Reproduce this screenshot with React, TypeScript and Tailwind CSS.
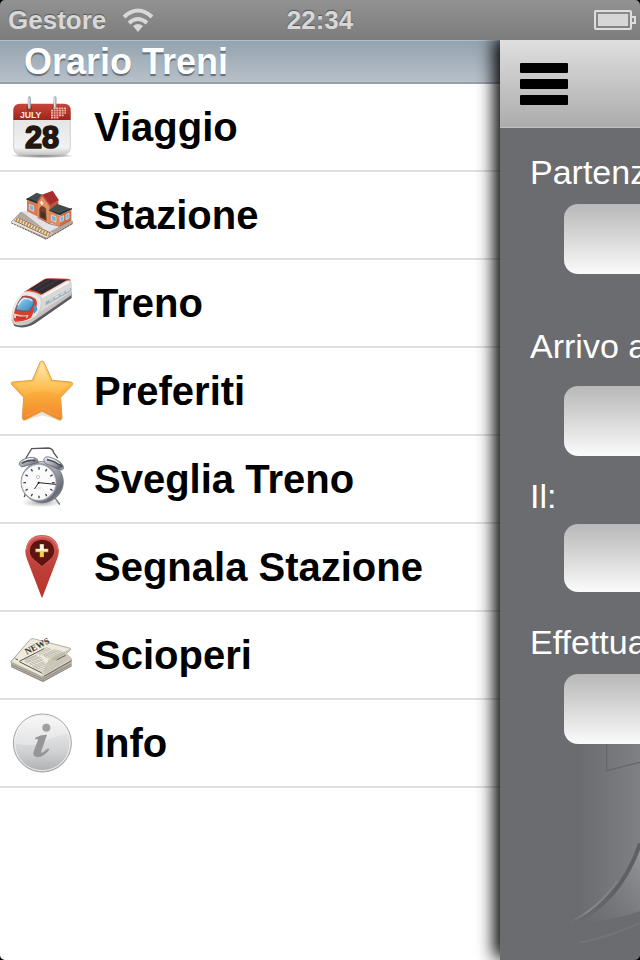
import type { ReactNode } from "react";

function Icon({ children }: { children: ReactNode }) {
  return (
    <svg viewBox="30 30 192 192" className="size-16 shrink-0" aria-hidden="true">
      {children}
    </svg>
  );
}

function CalendarIcon() {
  return (
    <Icon>
      <defs>
        <linearGradient id="calRed" x1="0" y1="0" x2="0" y2="1">
          <stop offset="0" stopColor="#c8473c" />
          <stop offset="1" stopColor="#9d2418" />
        </linearGradient>
        <linearGradient id="calBody" x1="0" y1="0" x2="0" y2="1">
          <stop offset="0" stopColor="#dedede" />
          <stop offset="0.85" stopColor="#f2f2f2" />
          <stop offset="1" stopColor="#c4c4c4" />
        </linearGradient>
        <radialGradient id="calShade">
          <stop offset="0" stopColor="#555" stopOpacity="0.8" />
          <stop offset="0.7" stopColor="#777" stopOpacity="0.5" />
          <stop offset="1" stopColor="#999" stopOpacity="0" />
        </radialGradient>
      </defs>
      <ellipse cx="126" cy="212" rx="96" ry="7" fill="url(#calShade)" />
      <rect x="41" y="62" width="170" height="148" rx="22" fill="url(#calBody)" stroke="#bdbdbd" strokeWidth="2" />
      <path d="M40 105V76q0-20 20-20h132q20 0 20 20v29z" fill="url(#calRed)" />
      <g fill="#8f2a20">
        <circle cx="88" cy="69" r="8" />
        <circle cx="165" cy="69" r="8" />
      </g>
      <g stroke="#9a9ea1" strokeWidth="9" strokeLinecap="round">
        <path d="M88 38v30M165 38v30" />
      </g>
      <g stroke="#dfe3e5" strokeWidth="4" strokeLinecap="round">
        <path d="M87 38v29M164 38v29" />
      </g>
      <text x="60" y="98" fontSize="26" fontWeight="700" fill="#fbeae6" fontFamily="Liberation Sans, sans-serif">JULY</text>
      <g stroke="#eab8af" strokeWidth="5" strokeDasharray="6 2">
        <path d="M160 70h38M153 77h45M153 84h45M153 91h38M153 98h22" />
      </g>
      <text x="126" y="190" textAnchor="middle" fontSize="92" fontWeight="700" fill="#221711" stroke="#221711" strokeWidth="5" strokeLinejoin="round" fontFamily="Liberation Sans, sans-serif">28</text>
    </Icon>
  );
}

function StationIcon() {
  return (
    <Icon>
      <path d="M32 147l30-31 157 28v9l-82 47z" fill="#b3a89f" />
      <path d="M66 116l82-20 67 46-70 36z" fill="#e2e1e6" />
      <path d="M34 148l19-17 106 49-18 14z" fill="#ece5d8" />
      <path d="M43 143l99 46M53 133l101 48" stroke="#8a7261" strokeWidth="3" />
      <path d="M48 138l101 47" stroke="#ba8842" strokeWidth="10" strokeDasharray="5 4" />
      <path d="M34 150l105 48 79-47" fill="none" stroke="#6b5b5a" strokeWidth="3" strokeDasharray="6 3" />
      <path d="M81 80l39 14v40l-39-19z" fill="#d97b4d" />
      <path d="M78 79l32-20 27 10-22 24z" fill="#424b4e" />
      <path d="M78 79l37 14v-5L83 75z" fill="#283235" />
      <path d="M113 88l13-22 22 29v58l-35-20z" fill="#e39361" />
      <path d="M126 65l32-12 19 29-28 16z" fill="#a52e2d" />
      <path d="M112 89l14-23 23 31" fill="none" stroke="#c5594a" strokeWidth="4" />
      <path d="M148 97l27-14v40l-27 30z" fill="#b9593c" />
      <path d="M148 114l31 14v32l-31-12z" fill="#e28a59" />
      <path d="M179 126l35-16v31l-35 19z" fill="#cd7047" />
      <path d="M146 112l26-19 44 15-37 18z" fill="#414a4c" />
      <path d="M146 112l33 14 37-17v-4l-37 16z" fill="#263033" />
      <path d="M118 108q6-17 20-1l2 37-22-11z" fill="#70402c" />
      <path d="M122 114l14 7v18l-14-8z" fill="#4b3027" />
      <g fill="#77b5e1" stroke="#e6edf2" strokeWidth="2">
        <path d="M88 94l13 5v16l-13-6zM154 126l14 5v16l-14-6zM181 132l10-4v14l-10 5zM198 125l9-4v14l-9 5z" />
      </g>
      <path d="M125 84v11M120 88l10 4" stroke="#f7eee8" strokeWidth="4" />
      <path d="M113 134l35 18 31 8 35-19" fill="none" stroke="#9b4936" strokeWidth="2" />
    </Icon>
  );
}

function TrainIcon() {
  return (
    <Icon>
      <defs>
        <linearGradient id="trainBody" x1="0" y1="0" x2="1" y2="1">
          <stop offset="0" stopColor="#f4f3f2" />
          <stop offset="0.5" stopColor="#d8d4d2" />
          <stop offset="1" stopColor="#948d8c" />
        </linearGradient>
        <linearGradient id="trainGlass" x1="0" y1="0" x2="1" y2="1">
          <stop offset="0" stopColor="#a7dbf5" />
          <stop offset="1" stopColor="#2c80c0" />
        </linearGradient>
      </defs>
      <path d="M34 176l9 19q28 11 61-7l111-77V94L84 180z" fill="#5a5b60" />
      <path d="M34 172q-1-40 32-76l65-40q8-5 19-4l54 2q10 2 11 14v34l-110 76q-31 23-62 12-8-4-9-18z" fill="url(#trainBody)" />
      <path d="M72 93l60-38q8-4 20-3l50 1q8 1 12 5l-17 1-74 43q-21-12-49-12z" fill="#d3422e" />
      <path d="M87 85l51-31 64 2-76 43q-17-11-39-14z" fill="#302c31" />
      <path d="M98 86l54-32M112 91l64-36" stroke="#4e484d" strokeWidth="2" />
      <path d="M124 106l82-46q7 0 8 8v24l-94 60q10-24 4-46z" fill="#dbd8d6" />
      <path d="M137 122l76-42v10l-76 43z" fill="#9db0c0" />
      <path d="M148 120l62-35" stroke="#d8e6ee" strokeWidth="4" strokeDasharray="14 5" />
      <path d="M126 108l80-45" stroke="#fbfaf9" strokeWidth="5" />
      <path d="M37 170q0-39 30-73 31-7 51 13 8 12 2 32l-12 25q-31 18-70 17z" fill="#eceae8" />
      <path d="M42 156q6-29 25-51 20-5 37 7 9 7 6 22l-17 36q-19 12-48 12-8-7-3-26z" fill="#d83e2b" />
      <path d="M50 137q5-18 19-29 18-2 31 8 4 6-1 16l-12 18q-18 1-39-4z" fill="url(#trainGlass)" stroke="#3f5c74" strokeWidth="2" />
      <path d="M54 133q9-17 19-21 16 0 24 7" fill="none" stroke="#daf1fb" strokeWidth="4" />
      <path d="M41 157q22 9 45 5l-4 8q-20 5-41 0z" fill="#efc9c2" />
      <path d="M48 164q17 4 32 2l-3 7q-14 3-29 0z" fill="#c7372a" />
      <path d="M37 175l4 9q28 4 51-7l22-15" fill="none" stroke="#c9c4c2" strokeWidth="4" />
      <path d="M103 131q9 2 9 16l-10 12q-5-14 1-28z" fill="#4a94cf" />
    </Icon>
  );
}

function StarIcon() {
  return (
    <Icon>
      <defs>
        <linearGradient id="starFill" x1="0" y1="0" x2="0" y2="1">
          <stop offset="0" stopColor="#ffdc85" />
          <stop offset="0.45" stopColor="#fdb440" />
          <stop offset="1" stopColor="#f0862a" />
        </linearGradient>
        <linearGradient id="starGloss" x1="0" y1="0" x2="0" y2="1">
          <stop offset="0" stopColor="#fff2c8" stopOpacity="0.7" />
          <stop offset="1" stopColor="#ffd26d" stopOpacity="0.15" />
        </linearGradient>
      </defs>
      <path d="M70 213l56-22 58 22-57-17z" fill="#796840" stroke="#c5b58c" strokeWidth="6" opacity="0.35" />
      <path d="M120 40q6-8 12 0l24 54 57 5q9 3 3 10l-34 36 4 60q0 10-10 7l-50-25-50 25q-10 3-9-7l4-60-35-37q-6-8 3-9l58-5z" fill="url(#starFill)" stroke="#dba046" strokeWidth="3" strokeLinejoin="round" />
      <path d="M126 43l26 55 58 6-34 32q-50-20-101 4l-31-36 58-6z" fill="url(#starGloss)" />
      <path d="M74 203l52-24 54 24" fill="none" stroke="#f79d45" strokeWidth="3" />
    </Icon>
  );
}

function ClockIcon() {
  const ticks = Array.from({ length: 12 }, (_, i) => i * 30);
  return (
    <Icon>
      <defs>
        <linearGradient id="clockMetal" x1="0" y1="0" x2="1" y2="1">
          <stop offset="0" stopColor="#eef0f3" />
          <stop offset="0.5" stopColor="#a2a6ae" />
          <stop offset="0.8" stopColor="#666a74" />
          <stop offset="1" stopColor="#c9ccd2" />
        </linearGradient>
        <radialGradient id="clockShade">
          <stop offset="0" stopColor="#777" stopOpacity="0.7" />
          <stop offset="1" stopColor="#999" stopOpacity="0" />
        </radialGradient>
      </defs>
      <ellipse cx="125" cy="197" rx="62" ry="14" fill="url(#clockShade)" />
      <path d="M78 63l17-28 50-2q13 1 16 14l11 15M78 165l-5 14M164 182l14 19" fill="none" stroke="#54565d" strokeWidth="4" strokeLinecap="round" />
      <path d="M164 183l12 17" stroke="#babdc5" strokeWidth="2" />
      <ellipse cx="127" cy="135" rx="63" ry="62" fill="url(#clockMetal)" stroke="#666a74" strokeWidth="2" />
      <path d="M58 84q-3-13 20-20 22-7 34 3l3 10-50 13z" fill="url(#clockMetal)" stroke="#585b65" strokeWidth="2" />
      <path d="M131 68q3-14 24-6 33 12 36 30-2 10-12 6l-44-19z" fill="url(#clockMetal)" stroke="#585b65" strokeWidth="2" />
      <path d="M65 79q18-12 42-8M141 68q28 5 45 22" fill="none" stroke="#4a4f5a" strokeWidth="5" />
      <path d="M73 70q11-6 27-5M145 64q22 5 34 16" fill="none" stroke="#fff" strokeWidth="3" />
      <ellipse cx="117" cy="136" rx="55" ry="57" fill="#868b95" />
      <ellipse cx="116" cy="136" rx="51" ry="53" fill="#fbfbfc" stroke="#cbced4" strokeWidth="2" />
      {ticks.map((angle) => (
        <path key={angle} d="M117 90v8" stroke="#3e4149" strokeWidth="4" transform={"rotate(" + angle + " 117 137)"} />
      ))}
      <circle cx="114" cy="120" r="5" fill="none" stroke="#aaa" strokeWidth="2" />
      <path d="M116 137l50 5M116 137l-12 18" stroke="#24262b" strokeWidth="3" strokeLinecap="round" />
      <circle cx="116" cy="137" r="3" fill="#111" />
      <path d="M106 153h18" stroke="#aaa" strokeWidth="2" strokeDasharray="4 2" />
    </Icon>
  );
}

function PinIcon() {
  return (
    <Icon>
      <defs>
        <linearGradient id="pinRed" x1="0" y1="0" x2="0" y2="1">
          <stop offset="0" stopColor="#d65a55" />
          <stop offset="0.5" stopColor="#bd4039" />
          <stop offset="1" stopColor="#b93328" />
        </linearGradient>
        <linearGradient id="pinCross" x1="0" y1="0" x2="0" y2="1">
          <stop offset="0.45" stopColor="#fffbe9" />
          <stop offset="0.55" stopColor="#f3d44c" />
        </linearGradient>
      </defs>
      <path d="M126 220L81 103q-7-17-4-32 5-28 29-38 20-6 42 1 25 11 28 38 2 15-5 31z" fill="url(#pinRed)" />
      <path d="M79 74q3-27 28-37 19-6 40 1 24 11 27 36" fill="none" stroke="#e77f79" strokeWidth="3" />
      <path d="M126 125L98 101q-15-15-8-35 9-22 36-23 28 1 36 23 7 20-9 36z" fill="#5f1412" stroke="#dc6662" strokeWidth="2" />
      <path d="M119 57h13v14h13v11h-13v15h-13V82h-13V71h13z" fill="url(#pinCross)" stroke="#321008" strokeWidth="1" />
    </Icon>
  );
}

function NewsIcon() {
  return (
    <Icon>
      <path d="M33 148l96 43 86-50v19l-86 48-96-46z" fill="#b7b2a7" />
      <path d="M34 155l95 44 86-46M34 161l95 44 86-46" fill="none" stroke="#79736a" strokeWidth="2" />
      <path d="M33 149q-2-4 3-7l52-60q5-7 12-5l109 28q6 2 0 8l-10 9 15 15v7l-85 48z" fill="#d7d2c5" stroke="#99948a" strokeWidth="2" />
      <path d="M37 145l52-62q4-5 11-4l108 29-63 32-20 49z" fill="#eeebdd" />
      <path d="M127 190l16-43q18-23 66-36l-14 16 18 9-84 52z" fill="#ccc6b9" />
      <path d="M58 145l74-38M54 141l-8-4M58 146l69 35" stroke="#53504a" strokeWidth="3" />
      <text x="80" y="125" transform="rotate(-27 80 125)" fontSize="27" fontWeight="700" fill="#37342f" fontFamily="Liberation Serif, serif">NEWS</text>
      <g stroke="#a7a398" strokeWidth="2">
        <path d="M107 121l35-18M112 123l37-18M117 126l36-18" />
        <path d="M75 140l34-14M73 144l39-16M76 147l42-16M79 150l44-17M87 153l41-16M91 156l37-15" />
        <path d="M127 127l39-18M131 129l41-18M135 131l44-19M139 134l46-20M145 136l45-19M153 139l42-18M160 141l36-13" />
        <path d="M96 160l35-14M99 163l36-14M103 166l37-14M107 169l32-11M113 173l26-9M120 177l16-6" />
      </g>
      <path d="M170 141q14-8 27-14M132 190l82-47" fill="none" stroke="#6b665d" strokeWidth="3" />
    </Icon>
  );
}

function InfoIcon() {
  return (
    <Icon>
      <defs>
        <linearGradient id="infoFill" x1="0" y1="0" x2="0" y2="1">
          <stop offset="0" stopColor="#f6f6f6" />
          <stop offset="0.65" stopColor="#d0d1d3" />
          <stop offset="1" stopColor="#aeafb2" />
        </linearGradient>
      </defs>
      <circle cx="127" cy="126" r="87" fill="url(#infoFill)" stroke="#a5a5a5" strokeWidth="3" />
      <circle cx="127" cy="126" r="83" fill="none" stroke="#f0f0f0" strokeWidth="3" />
      <path d="M45 126q0-80 82-82 66 3 80 56-43 4-74 22-40 19-88 4z" fill="#fff" opacity="0.3" />
      <circle cx="139" cy="80" r="12" fill="#a0a0a2" />
      <path d="M106 110q16-10 35-9-4 12-16 46-4 10 2 8l17-13 4 4q-19 24-37 22-16-2-9-20l12-31q0-5-10-2z" fill="#969698" />
    </Icon>
  );
}

const menu = [
  { label: "Viaggio", icon: <CalendarIcon /> },
  { label: "Stazione", icon: <StationIcon /> },
  { label: "Treno", icon: <TrainIcon /> },
  { label: "Preferiti", icon: <StarIcon /> },
  { label: "Sveglia Treno", icon: <ClockIcon /> },
  { label: "Segnala Stazione", icon: <PinIcon /> },
  { label: "Scioperi", icon: <NewsIcon /> },
  { label: "Info", icon: <InfoIcon /> },
];

const fields = [
  { id: "partenza", label: "Partenza", group: "pt-6 gap-3", box: "h-[70px]" },
  { id: "arrivo", label: "Arrivo a", group: "pt-13 gap-5", box: "h-[70px]" },
  { id: "data", label: "Il:", group: "pt-5 gap-2", box: "h-[68px]" },
  { id: "effettua", label: "Effettua", group: "pt-[30px] gap-3", box: "h-[70px]" },
];

function StatusBar() {
  return (
    <header className="relative z-20 grid h-10 shrink-0 grid-cols-3 items-center bg-linear-to-b from-[#929292] to-[#7c7c7c] px-2 text-[26px] leading-10 font-bold text-[#d8d8d8] [text-shadow:0_-1px_1px_#555]">
      <div className="flex items-center gap-4">
        <span>Gestore</span>
        <svg viewBox="0 0 32 24" className="h-6 w-8" aria-hidden="true">
          <path d="M2 9q14-13 28 0M7 15q9-8 18 0" fill="none" stroke="#d8d8d8" strokeWidth="4" />
          <path d="M11 18q5-4 10 0l-5 6z" fill="#d8d8d8" />
        </svg>
      </div>
      <span className="text-center">22:34</span>
      <svg viewBox="0 0 42 20" className="-mr-1 h-5 w-[42px] justify-self-end" aria-hidden="true">
        <rect x="1" y="1" width="36" height="18" rx="1" fill="none" stroke="#dedede" strokeWidth="2" />
        <rect x="4" y="4" width="30" height="12" fill="#d6d6d6" />
        <path d="M38 7h3v6h-3" fill="none" stroke="#dedede" strokeWidth="2" />
      </svg>
    </header>
  );
}

function SideMenu() {
  return (
    <nav className="min-w-0 flex-[25] bg-white" aria-label="Orario Treni">
      <h1 className="h-11 border-t border-b-2 border-t-[#b3bfc7] border-b-[#98a0a7] bg-linear-to-b from-[#94a3ae] to-[#b8c0c9] px-6 text-[36px] leading-[42px] font-bold text-white [text-shadow:0_2px_1px_#636c73]">
        Orario Treni
      </h1>
      <ul>
        {menu.map((item) => (
          <li key={item.label} className="border-b-2 border-[#e0e0e0]">
            <a href="#" className="flex h-[86px] items-center gap-5 px-2.5 text-[40px] font-bold text-black">
              {item.icon}
              <span className="truncate">{item.label}</span>
            </a>
          </li>
        ))}
      </ul>
    </nav>
  );
}

function Backdrop() {
  return (
    <svg viewBox="60 0 420 660" className="absolute right-0 bottom-0 h-[220px] w-[140px]" aria-hidden="true">
      <defs>
        <linearGradient id="wall" x1="0" y1="0" x2="1" y2="0">
          <stop offset="0" stopColor="#85878b" stopOpacity="0" />
          <stop offset="1" stopColor="#85878b" stopOpacity="0.75" />
        </linearGradient>
        <linearGradient id="ground" x1="0" y1="1" x2="1" y2="0">
          <stop offset="0" stopColor="#7c7e81" stopOpacity="0" />
          <stop offset="1" stopColor="#a0a1a4" />
        </linearGradient>
        <linearGradient id="railDark" gradientUnits="userSpaceOnUse" x1="270" y1="550" x2="400" y2="440">
          <stop offset="0" stopColor="#5e6063" stopOpacity="0" />
          <stop offset="1" stopColor="#5e6063" />
        </linearGradient>
        <linearGradient id="railLight" gradientUnits="userSpaceOnUse" x1="270" y1="550" x2="400" y2="440">
          <stop offset="0" stopColor="#8c8e91" stopOpacity="0" />
          <stop offset="0.4" stopColor="#8c8e91" />
          <stop offset="1" stopColor="#8c8e91" stopOpacity="0.5" />
        </linearGradient>
      </defs>
      <path d="M300 10h180v310q-60 150-180 218z" fill="url(#wall)" />
      <path d="M380 10v82l100-25" fill="none" stroke="#66686c" strokeWidth="4" />
      <path d="M480 330q-60 150-180 218 110-8 180-35z" fill="url(#ground)" opacity="0.8" />
      <path d="M480 310q-60 180-210 240" fill="none" stroke="url(#railDark)" strokeWidth="12" />
      <path d="M412 422q-55 84-145 126" fill="none" stroke="url(#railLight)" strokeWidth="5" />
      <path d="M300 608q90-18 180-60" fill="none" stroke="#737579" strokeWidth="6" />
      <path d="M470 660l10-10v10z" fill="#000" />
    </svg>
  );
}

function SearchPanel() {
  return (
    <main className="relative z-10 min-w-0 flex-[7] bg-[#6a6c70] shadow-[-6px_-2px_16px_#000]">
      <Backdrop />
      <div className="flex h-22 items-center border-b border-[#c0c0c0] bg-linear-to-b from-[#dfdfdf] to-[#acacac] px-5">
        <button type="button" aria-label="Menu" className="flex w-12 flex-col gap-1.5">
          <span className="h-2.5 w-full rounded-[1px] bg-black" />
          <span className="h-2.5 w-full rounded-[1px] bg-black" />
          <span className="h-2.5 w-full rounded-[1px] bg-black" />
        </button>
      </div>
      <form className="relative overflow-hidden">
        {fields.map((field) => (
          <div key={field.id} className={"flex flex-col " + field.group}>
            <label htmlFor={field.id} className="pl-[30px] text-[34px] leading-10 whitespace-nowrap text-white">
              {field.label}
            </label>
            <div className="flex pl-16">
              <input
                id={field.id}
                type="text"
                className={"min-w-0 flex-1 rounded-l-[14px] bg-linear-to-b from-[#b8b8b8] to-[#fbfbfb] px-4 text-2xl text-black " + field.box}
              />
            </div>
          </div>
        ))}
      </form>
    </main>
  );
}

export default function App() {
  return (
    <div className="min-h-screen bg-black font-['Liberation_Sans',Arial,sans-serif]">
      <div className="flex min-h-screen flex-col overflow-hidden rounded-[5px]">
        <StatusBar />
        <div className="flex flex-1">
          <SideMenu />
          <SearchPanel />
        </div>
      </div>
    </div>
  );
}
